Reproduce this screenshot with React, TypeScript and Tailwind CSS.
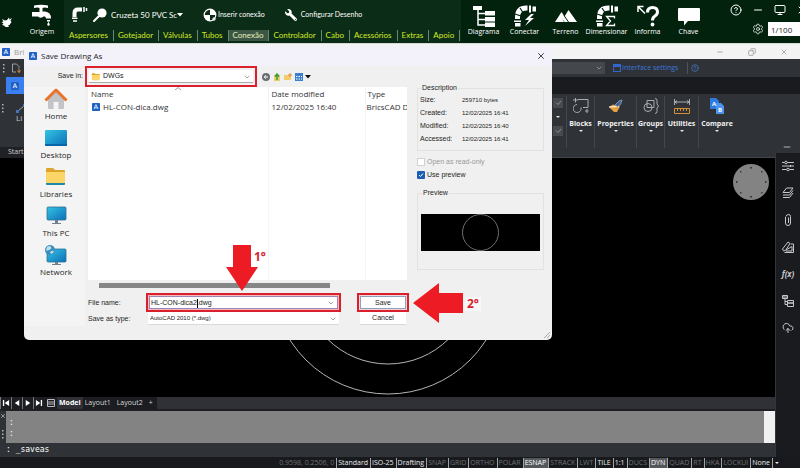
import React from "react";
import {
  ChevronDown,
  CircleHelp,
  Copy,
  Minus,
  Monitor,
  Settings,
  X,
  CloudUpload,
} from "lucide-react";
import { FaWrench } from "react-icons/fa";

const UI = "font-['Open_Sans','Noto_Sans',sans-serif]";
const CLASSIC = "font-['Liberation_Sans',Arial,sans-serif]";
const NARROW = "font-['Lato','Open_Sans',sans-serif]";

/* ---------- Header (irrigation plug-in) ---------- */

function FaucetIcon() {
  return (
    <svg viewBox="0 0 20 22" className="h-[22px] w-5" fill="#fff">
      <path d="M2 1.5Q9 .2 16 1.5V4Q12 3.2 10.5 4v3.5H13Q19 8 19 14.5h-5q0-2-2-2.200Q9 15 6 12.500H0V8h7.500V4Q6 3.200 2 4z" />
      <path d="M15 16h3v1.500h-3zM16.500 17.800q2.500 3.700 0 4-2.500-.3 0-4z" />
    </svg>
  );
}

function BirdIcon() {
  return (
    <svg viewBox="0 0 12 12" className="h-3 w-3" fill="#fff">
      <path d="M1 3l3 1.500L6 4l2-2.500.5 2L11 2 9.500 4.500l1 1.500-2 3L7 9.500 8 11H4.500L3 9.500 1 9l1.500-1.500L.5 6l2-.5z" />
    </svg>
  );
}

function SprinklerIcon() {
  return (
    <svg viewBox="0 0 16 16" className="h-4 w-4">
      <path d="M2.500 10V6q0-3.500 3.500-3.500h4" fill="none" stroke="#fff" strokeWidth="4" />
      <path d="M0 11.200h5.500M1 14h4M12 0v5M14.500 1v3" stroke="#fff" strokeWidth="1.500" />
    </svg>
  );
}

function MagnifierIcon() {
  return (
    <svg viewBox="0 0 14 14" className="h-3.5 w-3.5">
      <circle cx="9" cy="5" r="4.600" fill="#fff" />
      <path d="M5.500 8.500L1 13" stroke="#fff" strokeWidth="2" strokeLinecap="round" />
    </svg>
  );
}

function InsertIcon() {
  return (
    <svg viewBox="0 0 14 14" className="h-3.5 w-3.5">
      <circle cx="7" cy="7" r="5.800" fill="none" stroke="#fff" strokeWidth="1.200" />
      <path d="M7 7V1A6 6 0 0 1 13 7zM7 7v6A6 6 0 0 1 1 7z" fill="#fff" />
      <path d="M9 11h4M11 9v4" stroke="#fff" />
    </svg>
  );
}

function DiagramIcon() {
  return (
    <svg viewBox="0 0 24 24" className="h-6 w-6" fill="#fff">
      <path d="M1 2h9v4H1zM13 7h10v4.500H13zM13 13h10v4.500H13zM13 18.500h10V23H13z" />
      <path d="M6 6v15h7M6 9.500h7M6 15.500h7" fill="none" stroke="#fff" strokeWidth="1.500" />
    </svg>
  );
}

function PipeBase() {
  return (
    <>
      <path d="M4.500 15V13q0-9 9-9h1" fill="none" stroke="#fff" strokeWidth="5" />
      <path d="M2 10l6 2M7 4l3 4.500" stroke="#02220e" strokeWidth="1.200" />
      <path d="M1 16.500h7V18H1zM2 19h5.500v3.500H2zM16 1.500h2v7h-2zM19.500 2.500H23v5h-3.500z" fill="#fff" />
    </>
  );
}

function ConnectIcon() {
  return (
    <svg viewBox="0 0 24 24" className="h-6 w-6">
      <PipeBase />
      <path d="M18 10l-6 6h4l-4 6 9-8h-4l4-4z" fill="#fff" />
    </svg>
  );
}

function SizeIcon() {
  return (
    <svg viewBox="0 0 24 24" className="h-6 w-6">
      <PipeBase />
      <path d="M19.500 14.500v-2h-8l4 4.500-4 4.500h8v-2" fill="none" stroke="#fff" strokeWidth="1.300" />
    </svg>
  );
}

function TerrainIcon() {
  return (
    <svg viewBox="0 0 24 24" className="h-6 w-6" fill="#fff">
      <path d="M1 18L7.500 8l3 4.500L14.500 6 23 18H10.500L8 14l2 4z" />
      <path d="M10 11.500l4.500 6.500" stroke="#02220e" />
    </svg>
  );
}

function InfoIcon() {
  return (
    <svg viewBox="0 0 24 24" className="h-6 w-6" fill="none" stroke="#fff">
      <path d="M2 8V2.500h5.500M2.500 3L9 9.500" strokeWidth="1.500" />
      <path d="M11.500 8.500q0-5 5-5t5 4.500q0 2.500-2.800 4.200-2.200 1.300-2.200 4.300" strokeWidth="3" />
      <circle cx="16.500" cy="20.500" r="1.900" fill="#fff" stroke="none" />
    </svg>
  );
}

function KeyIcon() {
  return (
    <svg viewBox="0 0 24 24" className="h-6 w-6" fill="#fff">
      <path d="M2 4h20q1 0 1 1v11q0 1-1 1H11l-4 4.500V17H2q-1 0-1-1V5q0-1 1-1z" />
    </svg>
  );
}

const TABS = [
  "Aspersores",
  "Gotejador",
  "Válvulas",
  "Tubos",
  "Conexão",
  "Controlador",
  "Cabo",
  "Acessórios",
  "Extras",
  "Apoio",
];

const TOOLS = [
  { label: "Diagrama", icon: <DiagramIcon /> },
  { label: "Conectar", icon: <ConnectIcon /> },
  { label: "Terreno", icon: <TerrainIcon /> },
  { label: "Dimensionar", icon: <SizeIcon /> },
  { label: "Informa", icon: <InfoIcon /> },
  { label: "Chave", icon: <KeyIcon /> },
];

function Header() {
  return (
    <header className="flex h-[43px] shrink-0 overflow-hidden bg-[#02220e] text-white">
      <div className="flex w-5 shrink-0 items-center pl-px">
        <BirdIcon />
      </div>
      <button className="flex w-11 shrink-0 flex-col items-center pt-1">
        <FaucetIcon />
        <span className="text-[7px] leading-3">Origem</span>
      </button>
      <div className={`flex w-[397px] shrink-0 flex-col bg-[#0b2c16] ${NARROW}`}>
        <div className="flex h-[28px] items-center pl-2 pt-px">
          <SprinklerIcon />
          <span className="pl-[5px]">
            <MagnifierIcon />
          </span>
          <select
            aria-label="Conexão"
            className="ml-1 w-[66px] appearance-none text-[8px] leading-3"
            defaultValue="cruzeta"
          >
            <option value="cruzeta">Cruzeta 50 PVC Sc</option>
          </select>
          <svg viewBox="0 0 6 4" className="h-1 w-1.5">
            <path d="M0 0h6L3 3.500z" fill="#fff" />
          </svg>
          <button className="ml-5 flex items-center gap-px text-[7px]">
            <InsertIcon />
            Inserir conexão
          </button>
          <button className="ml-5 flex items-center gap-1 text-[7px]">
            <FaWrench className="h-3 w-3 -scale-x-100" />
            Configurar Desenho
          </button>
        </div>
        <nav className="flex h-[15px] items-center pl-px text-[8px] leading-[11px] text-[#d3ea22]">
          {TABS.map((t) => (
            <button
              key={t}
              className={
                t === "Conexão"
                  ? "border-r border-[#6d8775] bg-[#3c5645] pl-1 pr-[5px] text-[#e6f0b8]"
                  : "border-r border-[#6d8775] pl-1 pr-[5px]"
              }
            >
              {t}
            </button>
          ))}
        </nav>
      </div>
      <div className="flex shrink-0 pl-0.5">
        {TOOLS.map((t) => (
          <button
            key={t.label}
            className="flex w-[41px] flex-col items-center pt-1 text-[7px] leading-[7px]"
          >
            {t.icon}
            <span>{t.label}</span>
          </button>
        ))}
      </div>
      <div className="ml-auto flex shrink-0 flex-col">
        <div className="flex h-5 items-center gap-2.5">
          <CircleHelp className="h-3 w-3" />
          <Minus className="h-3 w-3" strokeWidth={2} />
          <Monitor className="h-3 w-3" />
          <X className="-mr-2 h-3 w-3" strokeWidth={2} />
        </div>
        <div className="flex items-center justify-end gap-1 pt-0.5">
          <Settings className="h-3 w-3" strokeWidth={1.5} />
          <input
            aria-label="Escala"
            className="h-3.5 w-8 bg-white pl-[3px] text-[8px] text-[#222]"
            defaultValue="1/100"
          />
        </div>
      </div>
    </header>
  );
}

/* ---------- BricsCAD shell ---------- */

function AppBadge({ className }: { className: string }) {
  return (
    <svg viewBox="0 0 10 10" className={className}>
      <rect width="10" height="10" rx="1" fill="#1f62c4" />
      <path d="M2.500 7.500L5 2l2.500 5.500M3.500 6h3" fill="none" stroke="#fff" />
    </svg>
  );
}

function Dots() {
  return (
    <svg viewBox="0 0 2 10" className="h-2.5 w-0.5 shrink-0" fill="#b5b8bc">
      <path d="M0 1h1.500v1.500H0zM0 4.500h1.500V6H0zM0 8h1.500v1.500H0z" />
    </svg>
  );
}

function WindowBar() {
  return (
    <div className="flex h-4 shrink-0 items-center border-t border-[#d5dad6] bg-[#f3f3f4] pl-0.5 text-[8px] text-[#9a9a9e]">
      <AppBadge className="h-2 w-2" />
      <span className="pl-1">Bri</span>
      <div className="ml-auto flex w-[84px] justify-between pr-3 text-[#888]">
        <Minus className="h-2 w-2" strokeWidth={2} />
        <Copy className="h-2 w-2 -scale-x-100" strokeWidth={2} />
        <X className="h-2 w-2" strokeWidth={2} />
      </div>
    </div>
  );
}

function Toolbar() {
  return (
    <div className="flex h-[18px] shrink-0 items-center bg-[#2f3338] pl-[3px]">
      <Dots />
      <svg viewBox="0 0 10 10" className="ml-1.5 h-2.5 w-2.5" fill="none" stroke="#9da1a6">
        <path d="M5 9H1.500V1h4L8 3.500V5" />
        <path d="M8 5.500v4M6.500 7.500L8 9.500l1.500-2" stroke="#d0903c" />
      </svg>
      <div className="ml-auto flex items-center">
        <label className="relative flex">
          <select
            aria-label="Workspace"
            className="h-3 w-[120px] appearance-none bg-[#44484c] text-[7px]"
          >
            <option></option>
          </select>
          <ChevronDown className="absolute right-0.5 top-0.5 h-2 w-2 text-[#a5a8ac]" />
        </label>
        <button className="flex w-[83px] items-center gap-px border-r border-[#50545a] pl-2 text-[7px] leading-3 text-[#3d74d8]">
          <svg viewBox="0 0 8 8" className="h-2 w-2">
            <rect x=".5" y=".5" width="7" height="7" fill="none" stroke="#2f67cc" />
            <path d="M0 0h8v3H0z" fill="#2f67cc" />
          </svg>
          Interface settings
        </button>
        <button aria-label="Help" className="ml-[3px] mr-[101px] text-[#4b7ed2]">
          <CircleHelp className="h-2 w-2" />
        </button>
      </div>
    </div>
  );
}

const RIBBON = [
  {
    label: "Blocks",
    width: "w-7",
    icon: (
      <svg viewBox="0 0 16 16" className="h-4 w-4" fill="none" stroke="#a9adb1">
        <path d="M0 2h5M2.500 0v4.500M5 1.500h10v8h-5M14 11v4M12 13h3.500" />
        <path d="M8 9.500A4 4 0 1 1 4 6.500" />
      </svg>
    ),
  },
  {
    label: "Properties",
    width: "w-[42px]",
    icon: (
      <svg viewBox="0 0 16 16" className="h-4 w-4">
        <path d="M1 9l4-2.500 7 2L9 14H6z" fill="#e6a03c" />
        <path d="M1 9l10-.5" stroke="#fff" />
        <path d="M7 7l4-4 3-1-1.500 4.500-3 2z" fill="#43618f" stroke="#7d93b4" />
      </svg>
    ),
  },
  {
    label: "Groups",
    width: "w-7",
    icon: (
      <svg viewBox="0 0 16 16" className="h-4 w-4" fill="none" stroke="#a9adb1">
        <circle cx="5" cy="9.500" r="4" />
        <path d="M4 2.500h7v7H4zM12 .5q2 0 2 2V6l1.500 2L14 10v3.500q0 2-2 2" />
      </svg>
    ),
  },
  {
    label: "Utilities",
    width: "w-[34px]",
    icon: (
      <svg viewBox="0 0 16 16" className="h-4 w-4" fill="none">
        <path d="M.5 1v6M15.500 1v6M1 4h14M3 2.500L1 4l2 1.500M13 2.500L15 4l-2 1.500" stroke="#a9adb1" />
        <path d="M.5 10.500h15v5H.5zM3.500 11v2M6.500 11v2M9.500 11v2M12.500 11v2" stroke="#d58f35" />
      </svg>
    ),
  },
  {
    label: "Compare",
    width: "w-[37px]",
    icon: (
      <svg viewBox="0 0 16 16" className="h-4 w-4">
        <path d="M1 0h6l3 3v8H1z" fill="#2e7be0" />
        <path d="M7 5h5l3 3v8H7z" fill="#4d94ee" />
        <text x="3" y="8" fontSize="6" fontWeight="700" fill="#fff">A</text>
        <text x="9" y="14" fontSize="6" fontWeight="700" fill="#fff">B</text>
      </svg>
    ),
  },
];

function Caret() {
  return (
    <svg viewBox="0 0 4 2" className="h-0.5 w-1" fill="#e8e8e8">
      <path d="M0 0h4L2 2z" />
    </svg>
  );
}

function PanelCheck() {
  return (
    <svg viewBox="0 0 10 10" className="h-2.5 w-2.5">
      <path d="M0 0h10v10H0z" fill="#484b50" />
      <path d="M3 4.500l2 2 3-3.500" fill="none" stroke="#8b8e92" />
    </svg>
  );
}

function Ribbon() {
  return (
    <>
      <div className="flex h-[17px] shrink-0 bg-[#1a1b1f]">
        <div className="w-1.5 bg-[#2f3338]" />
        <div className="flex w-[18px] items-center justify-center bg-[#3b7ff0]">
          <AppBadge className="h-2 w-2" />
        </div>
      </div>
      <div className="flex h-[59px] shrink-0 bg-[#2f3338] text-[#f1f1f1]">
        <div className="flex w-6 overflow-hidden pl-0.5 pt-[9px]">
          <Dots />
          <div className="flex flex-col pl-3 text-[8px] leading-[10px] text-[#c5c7ca]">
            <svg viewBox="0 0 10 10" className="h-2.5 w-2.5">
              <path d="M1.500 8.500l7-6" stroke="#a9adb1" />
              <path d="M0 7h3v3H0zM7 1h3v3H7z" fill="#4472c0" />
            </svg>
            <span>Li</span>
          </div>
        </div>
        <div className="ml-auto flex">
          <div className="flex w-4 flex-col items-center gap-2 pt-1">
            <PanelCheck />
            <Caret />
            <PanelCheck />
          </div>
          {RIBBON.map((r) => (
            <button
              key={r.label}
              className={`${r.width} my-0.5 flex h-[52px] shrink-0 flex-col items-center border-l border-[#44484d] pt-[2px]`}
            >
              {r.icon}
              <span className="pt-1 text-[7px] font-bold leading-3">{r.label}</span>
              <Caret />
            </button>
          ))}
          <div className="flex w-[65px] items-end justify-end pb-px pr-2">
            <Minus className="h-2.5 w-2.5 text-[#ccc]" />
          </div>
        </div>
      </div>
    </>
  );
}

function Compass() {
  return (
    <svg viewBox="0 0 36 36" className="absolute right-[6px] top-[6px] h-9 w-9">
      <circle cx="18" cy="18" r="18" fill="#838383" />
      <path
        d="M17 3h2v1.500h-2zM17 32h2v1.500h-2zM3 17h1.500v2H3zM32 17h1.500v2H32zM7 7h1.500v1.500H7zM28 7h1.500v1.500H28zM7 28h1.500v1.500H7zM28 28h1.500v1.500H28z"
        fill="#3c3c3c"
      />
    </svg>
  );
}

function SideIcon({ children }: { children: React.ReactNode }) {
  return (
    <svg viewBox="0 0 12 12" className="h-3 w-3" fill="none" stroke="#c6c8cb">
      {children}
    </svg>
  );
}

function Sidebar() {
  return (
    <aside className="flex w-[25px] shrink-0 flex-col items-center gap-[15px] border-l border-[#33363b] bg-[#1a1b1f] pt-[7px] text-[#c6c8cb]">
      <button aria-label="Properties">
        <SideIcon>
          <path d="M0 2.500h2.500M5.500 2.500H12M0 6h12M0 9.500h4.500M7.500 9.500H12" />
          <circle cx="4" cy="2.500" r="1.300" />
          <circle cx="6" cy="9.500" r="1.300" />
          <path d="M8.500 5v2" />
        </SideIcon>
      </button>
      <button aria-label="Layers">
        <SideIcon>
          <path d="M4.500 1H11L7.500 5.500H1zM1 8h6.500L11 3.500M1 10.500h6.500L11 6" />
        </SideIcon>
      </button>
      <button aria-label="Attachments">
        <SideIcon>
          <path d="M3.500 3v6q0 2.500 2.500 2.500T8.500 9V2.500Q8.500 .5 6.500 .5T4 2.500M6.500 3.500V9" />
        </SideIcon>
      </button>
      <button aria-label="Materials">
        <SideIcon>
          <path d="M.5 8L6 1l2 1.500-4.500 7Q1 11 .5 8zM8.500 3h3v8.500h-9M4 9l6-3.500V10H4" />
        </SideIcon>
      </button>
      <button aria-label="Parameters" className="h-3 text-[8px] font-bold italic leading-3">
        f(x)
      </button>
      <button aria-label="Structure">
        <SideIcon>
          <path d="M.5 .5h5v3h-5zM5.500 5.500h6V8h-6zM5.500 8h6v3.500h-6zM3 3.500V9.500h2.500M3 6.500h2.500M1 2h4" />
        </SideIcon>
      </button>
      <button aria-label="Cloud">
        <CloudUpload className="h-3 w-3" strokeWidth={2} />
      </button>
    </aside>
  );
}

const NAV = [
  { label: "First", d: "M1 1h1.500v7H1zM8 1v7L3 4.500z" },
  { label: "Previous", d: "M7 1v7L2 4.500z" },
  { label: "Next", d: "M2 1v7l5-3.500z" },
  { label: "Last", d: "M1 1v7l5-3.500zM6.500 1H8v7H6.500z" },
];

function LayoutTabs() {
  return (
    <div className="flex h-3.5 shrink-0 items-center border-b-2 border-[#1d1f23] bg-[#2f3137] text-[7px] leading-3 text-[#d5d6d8]">
      <div className="flex items-center bg-[#1c1d21]">
        {NAV.map((n) => (
          <button
            key={n.label}
            aria-label={n.label}
            className="flex h-3 w-[11px] items-center justify-center border-l border-[#75787c]"
          >
            <svg viewBox="0 0 9 9" className="h-2 w-2" fill="#fff">
              <path d={n.d} />
            </svg>
          </button>
        ))}
        <button aria-label="Layouts" className="flex h-3 w-[13px] items-center justify-center">
          <svg viewBox="0 0 8 8" className="h-2 w-2" fill="none" stroke="#b9bbbe">
            <path d="M.5 .5h7v7h-7zM1 3h6M1 5h6" />
          </svg>
        </button>
        <button className="bg-[#2f3137] px-0.5 font-bold text-white">Model</button>
        <button className="px-0.5">Layout1</button>
        <button className="px-1">Layout2</button>
        <button className="pl-0.5 pr-1">+</button>
      </div>
    </div>
  );
}

function CommandLine() {
  return (
    <div className="shrink-0 bg-[#2f3236] font-['DejaVu_Sans_Mono',monospace] text-[8px] text-white">
      <div className="flex h-8">
        <div className="flex w-1.5 flex-col items-center gap-2.5 pt-0.5">
          <X className="h-1.5 w-1.5" />
          <Dots />
        </div>
        <div className="flex-1 bg-[#838383] pl-[3px] pt-1.5 leading-[11px]">
          <div>:</div>
          <div>:</div>
        </div>
        <div className="w-[11px] bg-[#f1f1f1]" />
      </div>
      <input
        aria-label="Command"
        className="block h-3.5 w-full pl-1.5 leading-[14px]"
        defaultValue=": _saveas"
      />
    </div>
  );
}

const STATUS = [
  ["Standard", "on"],
  ["ISO-25", "on"],
  ["Drafting", "on"],
  ["SNAP", "off"],
  ["GRID", "off"],
  ["ORTHO", "off"],
  ["POLAR", "off"],
  ["ESNAP", "lit"],
  ["STRACK", "off"],
  ["LWT", "off"],
  ["TILE", "on"],
  ["1:1", "on"],
  ["DUCS", "off"],
  ["DYN", "lit"],
  ["QUAD", "off"],
  ["RT", "off"],
  ["HKA", "off"],
  ["LOCKUI", "off"],
  ["None", "on"],
];

const STATUS_STYLE: Record<string, string> = {
  on: "text-[#e9eaeb]",
  off: "text-[#6d7074]",
  lit: "bg-[#54575b] text-white",
};

function StatusBar() {
  return (
    <footer className="flex h-[11px] shrink-0 items-center justify-end bg-[#17191c] pr-[21px] text-[7px] leading-[10px]">
      <span className="pr-0.5 text-[#6d7074]">0.9598, 0.2506, 0</span>
      {STATUS.map(([label, state]) => (
        <button
          key={label}
          className={`shrink-0 border-l border-[#a2a4a7] pl-px pr-0.5 ${STATUS_STYLE[state]}`}
        >
          {label}
        </button>
      ))}
      <span className="flex h-2.5 items-center border-l border-[#a2a4a7] pl-0.5">
        <Caret />
      </span>
    </footer>
  );
}

/* ---------- Save dialog ---------- */

function HomeIcon() {
  return (
    <svg viewBox="0 0 24 22" className="h-[22px] w-6">
      <path d="M4 10l8-8 8 8v10q0 1-1 1h-4.500v-7h-5v7H5q-1 0-1-1z" fill="#c2c4c8" />
      <path d="M1.500 12.500L12 2l10.500 10.500" fill="none" stroke="#e8742c" strokeWidth="3" strokeLinejoin="round" />
    </svg>
  );
}

function DesktopIcon() {
  return (
    <svg viewBox="0 0 24 22" className="h-[22px] w-6">
      <defs>
        <linearGradient id="screen" x1="0" y1="0" x2="1" y2="1">
          <stop offset="0" stopColor="#35c3e3" />
          <stop offset="1" stopColor="#0b6fb8" />
        </linearGradient>
      </defs>
      <rect x="1" y="3" width="22" height="16" rx="1" fill="url(#screen)" />
      <path d="M1 17h22v1q0 1-1 1H2q-1 0-1-1z" fill="#0a66a8" />
    </svg>
  );
}

function FolderIcon({ className, base = "#1e88a8" }: { className: string; base?: string }) {
  return (
    <svg viewBox="0 0 24 22" className={className}>
      <path d="M2 3q0-1 1-1h6l2 2h9q1 0 1 1v3H2z" fill="#dba52c" />
      <path d="M2 6h18q1 0 1 1v10H2z" fill="#fbd566" />
      <path d="M2 17h19v1q0 1-1 1H3q-1 0-1-1z" fill={base} />
    </svg>
  );
}

function PcIcon({ globe = false }: { globe?: boolean }) {
  return (
    <svg viewBox="0 0 24 22" className="h-[22px] w-6">
      <rect x="3" y={globe ? 5 : 2} width="19" height="13" rx="1" fill="url(#screen)" stroke="#2f7294" strokeWidth=".8" />
      <path d={globe ? "M11 18h3v2h3v1H8v-1h3z" : "M11 15h3v3h3v1H8v-1h3z"} fill="#74808a" />
      {globe && (
        <>
          <circle cx="6" cy="6" r="5" fill="#3b8cc0" />
          <path d="M3 3q3-2 4 0t-2 3-3 0zM6 8q3-2 4-1-1 3-3 3z" fill="#bfe0e8" />
        </>
      )}
    </svg>
  );
}

const PLACES = [
  { label: "Home", icon: <HomeIcon /> },
  { label: "Desktop", icon: <DesktopIcon /> },
  { label: "Libraries", icon: <FolderIcon className="h-[22px] w-6" /> },
  { label: "This PC", icon: <PcIcon /> },
  { label: "Network", icon: <PcIcon globe /> },
];

const DETAILS = [
  ["Size:", "259710 bytes"],
  ["Created:", "12/02/2025 16:41"],
  ["Modified:", "12/02/2025 16:40"],
  ["Accessed:", "12/02/2025 16:41"],
];

function FileList() {
  return (
    <div className="ml-[3px] h-[193px] w-[319px] overflow-hidden bg-white">
      <table className="h-full w-full table-fixed border-collapse text-left text-[8px] text-[#333]">
        <thead>
          <tr className="h-3.5">
            <th className="relative w-[180px] pl-[3px] font-normal">
              Name
              <svg viewBox="0 0 6 3" className="absolute left-[87px] top-0 h-[3px] w-1.5" fill="none" stroke="#999">
                <path d="M0 3l3-2.500L6 3" />
              </svg>
            </th>
            <th className="w-[97px] border-l border-[#f0f0f0] pl-[3px] font-normal">Date modified</th>
            <th className="border-l border-[#f0f0f0] pl-0.5 font-normal">Type</th>
          </tr>
        </thead>
        <tbody>
          <tr className="h-3">
            <td className="pl-1">
              <span className="flex items-center gap-[3px]">
                <AppBadge className="h-2 w-2" />
                HL-CON-dica.dwg
              </span>
            </td>
            <td className="border-l border-[#f5f5f5] pl-[3px]">12/02/2025 16:40</td>
            <td className="whitespace-nowrap border-l border-[#f5f5f5] pl-px">BricsCAD D</td>
          </tr>
          <tr>
            <td />
            <td className="border-l border-[#f5f5f5]" />
            <td className="border-l border-[#f5f5f5]" />
          </tr>
        </tbody>
      </table>
    </div>
  );
}

function DialogTools() {
  return (
    <div className="flex items-center gap-[3px] pl-[5px]">
      <svg viewBox="0 0 8 8" className="h-2 w-2">
        <circle cx="4" cy="4" r="4" fill="#6a6e74" />
        <path d="M6 4H2.500M4 2.300L2.200 4 4 5.700" fill="none" stroke="#fff" />
      </svg>
      <svg viewBox="0 0 8 8" className="h-2 w-2">
        <path d="M1 2h6v6H1z" fill="#e8cf6a" />
        <path d="M4 7V2M2 3.500L4 1l2 2.500" fill="none" stroke="#3f9a3a" strokeWidth="1.500" />
      </svg>
      <svg viewBox="0 0 8 8" className="h-2 w-2">
        <path d="M0 2h7v5H0z" fill="#f3cd6b" />
        <path d="M6 0v4M4 2h4" stroke="#e88a3a" />
      </svg>
      <svg viewBox="0 0 8 8" className="h-2 w-2">
        <path d="M0 0h8v8H0z" fill="#3a7fd0" />
        <path d="M1 3h1.500v1H1zM3.500 3H5v1H3.500zM6 3h1v1H6zM1 5.500h1.500v1H1zM3.500 5.500H5v1H3.500zM6 5.500h1v1H6z" fill="#fff" />
      </svg>
      <svg viewBox="0 0 6 4" className="-ml-px h-1 w-1.5">
        <path d="M0 0h6L3 3.500z" fill="#111" />
      </svg>
    </div>
  );
}

function SaveForm() {
  return (
    <div className="mt-1 grid grid-cols-[61px_195px_68px] pt-px text-[7px]">
      <label htmlFor="file" className="flex items-center pl-[3px] pt-0.5">
        File name:
      </label>
      <div className="relative flex h-[19px] border-2 border-[#d9202c] bg-[#f5b8bd] p-px">
        <input
          id="file"
          className="w-full border border-[#9a86b8] bg-white pl-px leading-3 text-[#222]"
          defaultValue="HL-CON-dica2.dwg"
        />
        <span className="absolute left-[49px] top-[4px] h-[9px] w-px bg-black" />
        <ChevronDown className="absolute right-1 top-1 h-2 w-2 text-[#777]" />
      </div>
      <button className="ml-4 h-[19px] w-[52px] border-2 border-[#d9202c] bg-[#f6d5d8] p-px">
        <span className="block h-full border border-[#8aa2bf] bg-white leading-[11px]">Save</span>
      </button>
      <label htmlFor="type" className="flex items-center pl-[3px] pt-0.5">
        Save as type:
      </label>
      <div className="relative flex h-[13px] px-0.5">
        <select
          id="type"
          className="w-full appearance-none border-b border-[#dadada] bg-white pl-0.5 text-[6px] leading-3 text-[#222]"
        >
          <option>AutoCAD 2010 (*.dwg)</option>
        </select>
        <ChevronDown className="absolute right-1 top-[3px] h-2 w-2 text-[#777]" />
      </div>
      <button className="ml-[19px] h-[13px] w-[46px] border-b border-[#dadada] bg-white leading-3">
        Cancel
      </button>
    </div>
  );
}

function InfoColumn() {
  return (
    <div className="w-[127px] pt-[18px] text-[7px] leading-[8px]">
      <fieldset className="h-[67px] border border-[#e2e2e2] pl-0.5">
        <legend className="ml-px px-px">Description</legend>
        <dl className="grid grid-cols-[42px_1fr] gap-y-[5px] pt-1">
          {DETAILS.map(([k, v]) => (
            <React.Fragment key={k}>
              <dt>{k}</dt>
              <dd className="text-[6px]">{v}</dd>
            </React.Fragment>
          ))}
        </dl>
      </fieldset>
      <label className="mt-[7px] flex items-center gap-0.5 text-[#999]">
        <input type="checkbox" disabled className="h-2 w-2 appearance-none border border-[#d2d2d2] bg-white" />
        Open as read-only
      </label>
      <label className="mt-[5px] flex items-center gap-0.5">
        <span className="relative flex">
          <input type="checkbox" defaultChecked className="h-2 w-2 appearance-none rounded-[1px] bg-[#1a5fb4]" />
          <svg viewBox="0 0 8 8" className="absolute inset-0 h-2 w-2">
            <path d="M2 4l1.500 1.500L6 2.500" fill="none" stroke="#fff" />
          </svg>
        </span>
        Use preview
      </label>
      <fieldset className="mt-2.5 h-[81px] border border-[#e2e2e2] px-[3px] pt-[17px]">
        <legend className="ml-px px-px">Preview</legend>
        <div className="flex h-[37px] items-center justify-center bg-black">
          <svg viewBox="0 0 37 37" className="h-[37px] w-[37px]">
            <circle cx="18.500" cy="18.500" r="18" fill="none" stroke="#8c8c8c" strokeWidth=".8" />
          </svg>
        </div>
      </fieldset>
    </div>
  );
}

function Callouts() {
  return (
    <div className="pointer-events-none text-[12px] font-bold leading-[14px] text-[#d9202c]">
      <svg viewBox="0 0 32 46" className="absolute left-[202px] top-[199px] h-[46px] w-8" fill="#ed1c24">
        <path d="M7 0h18v22h7L16 46 0 22h7z" />
      </svg>
      <span className="absolute left-[230px] top-[204px]">1°</span>
      <svg viewBox="0 0 50 40" className="absolute left-[389px] top-[237px] h-10 w-[50px]" fill="#ed1c24">
        <path d="M0 20L26 0v10h24v20H26v10z" />
      </svg>
      <span className="absolute left-[441px] top-[251px] bg-[#f7f7f7] px-0.5">2°</span>
    </div>
  );
}

function SaveDialog() {
  return (
    <div
      role="dialog"
      aria-label="Save Drawing As"
      className="absolute left-6 top-[46px] flex h-[294px] w-[528px] flex-col overflow-hidden rounded-[5px] bg-[#f0f0f0] text-[#1e1e1e]"
    >
      <div className="flex h-5 shrink-0 items-center bg-[#f3f1fa] pl-[5px] pr-1.5 text-[8px]">
        <AppBadge className="h-2 w-2" />
        <span className="pl-1">Save Drawing As</span>
        <button aria-label="Close" className="ml-auto">
          <X className="h-2.5 w-2.5" strokeWidth={2} />
        </button>
      </div>
      <div className={`flex flex-1 ${CLASSIC}`}>
        <div className="w-[61px]">
          <label htmlFor="folder" className="flex h-[21px] items-center justify-end pr-0.5 text-[7px]">
            Save in:
          </label>
          <div className={`flex h-[239px] flex-col gap-[5px] bg-[#f4f4f4] pl-[3px] pt-px ${UI}`}>
            {PLACES.map((p) => (
              <button key={p.label} className="flex flex-col items-center text-[8px] leading-3">
                {p.icon}
                {p.label}
              </button>
            ))}
          </div>
        </div>
        <div className="w-[332px]">
          <div className="flex h-[21px]">
            <div className="relative flex w-[172px] border-2 border-[#d9202c] p-0.5">
              <FolderIcon className="absolute left-1 top-1 h-2.5 w-2.5" base="#f0bf48" />
              <select
                id="folder"
                className="w-full appearance-none border-b border-[#aaa] bg-white pl-3.5 text-[7px] text-[#222]"
              >
                <option>DWGs</option>
              </select>
              <ChevronDown className="absolute right-1 top-[5px] h-2 w-2 text-[#777]" />
            </div>
            <DialogTools />
          </div>
          <div className={UI}>
            <FileList />
          </div>
          <div className="ml-3.5 mt-[3px] h-[5px] w-[231px] bg-[#868686]" />
          <SaveForm />
        </div>
        <InfoColumn />
      </div>
      <Callouts />
      <svg viewBox="0 0 6 6" className="absolute bottom-0.5 right-0.5 h-1.5 w-1.5" stroke="#aaa">
        <path d="M0 6l6-6M3 6l3-3" />
      </svg>
    </div>
  );
}

export default function App() {
  return (
    <div className={`relative flex h-screen flex-col overflow-hidden bg-black ${UI}`}>
      <Header />
      <WindowBar />
      <Toolbar />
      <Ribbon />
      <div className="flex min-h-0 flex-1">
        <main className="flex min-w-0 flex-1 flex-col">
          <div className="h-[5px] shrink-0 border-b border-[#43474c] bg-[#2f3338]">
            <div className="-mt-1.5 flex h-[11px] w-6 items-center bg-[#1f2125] pl-2 text-[7px] text-[#d0d1d3]">
              Start
            </div>
          </div>
          <div className="relative flex min-h-0 flex-1 items-center justify-center">
            <svg viewBox="0 0 238 238" className="h-[238px] w-[238px]" fill="none" stroke="#b5b5b5">
              <circle cx="119" cy="119" r="116" />
              <circle cx="119" cy="119" r="86" />
            </svg>
            <Compass />
          </div>
          <LayoutTabs />
          <CommandLine />
        </main>
        <Sidebar />
      </div>
      <StatusBar />
      <SaveDialog />
    </div>
  );
}
